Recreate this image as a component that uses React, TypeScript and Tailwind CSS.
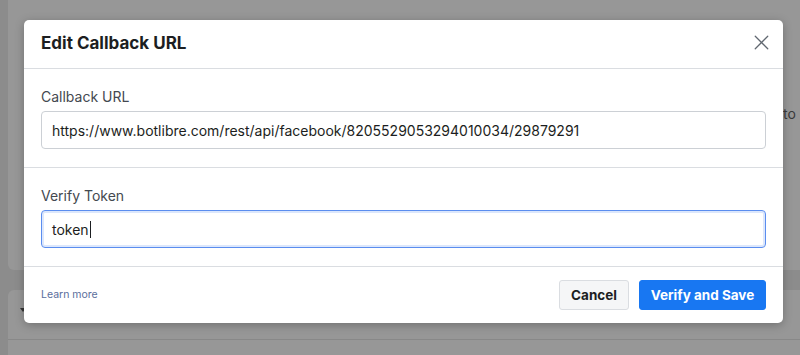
import { X } from 'lucide-react'

const font = { fontFamily: 'Inter, "Liberation Sans", Helvetica, Arial, sans-serif' }

function Field({ label, value, focused }: { label: string; value: string; focused?: boolean }) {
  return (
    <div className="px-[17px] pt-[19px] pb-[18px] border-b border-[#dadde1]">
      <div className="text-[14px] leading-[18px] text-[#444950] mb-[5px]">{label}</div>
      <div
        className={
          focused
            ? 'h-[38px] rounded-[4px] border border-[#5b8def] shadow-[inset_0_0_0_2px_#dce7fc] flex items-center px-[10px]'
            : 'h-[38px] rounded-[4px] border border-[#ccd0d5] flex items-center px-[10px]'
        }
      >
        <span className="text-[14px] text-[#1c1e21]">{value}</span>
        {focused && <span className="w-px h-[17px] bg-[#1c1e21] ml-px" />}
      </div>
    </div>
  )
}

export default function App() {
  return (
    <div className="relative w-[800px] h-[355px] overflow-hidden bg-[#8c8c8c]" style={font}>
      {/* dimmed page behind the dialog */}
      <div className="pl-[8px] flex flex-col gap-[20px]">
        <div className="h-[270px] bg-[#979797] rounded-bl-[6px] relative">
          <span className="absolute left-[775px] top-[103px] text-[14px] text-[#3a3a3a]">to</span>
        </div>
        <div className="h-[80px] bg-[#979797] rounded-tl-[6px] relative">
          <div className="h-[50px] border-b border-[#888888]" />
          <span className="absolute left-[12px] top-[18px] w-0 h-0 border-l-[3px] border-r-[3px] border-t-[4px] border-l-transparent border-r-transparent border-t-[#333]" />
        </div>
      </div>

      {/* dialog */}
      <div className="absolute left-[24px] top-[20px] w-[759px] bg-white rounded-[5px] shadow-[0_2px_10px_rgba(0,0,0,0.25)]">
        <div className="h-[49px] border-b border-[#dadde1] flex items-center justify-between pl-[17px] pr-[9px]">
          <h1 className="text-[17px] font-bold text-[#1c1e21]">Edit Callback URL</h1>
          <X size={25} strokeWidth={1.2} className="text-[#606770] -mt-[3px]" />
        </div>

        <Field label="Callback URL" value="https://www.botlibre.com/rest/api/facebook/8205529053294010034/29879291" />
        <Field label="Verify Token" value="token" focused />

        <div className="flex items-center justify-between px-[17px] py-[13px]">
          <a className="text-[10.5px] text-[#5a6e9c]">Learn more</a>
          <div className="flex gap-[10px]">
            <button className="h-[30px] w-[70px] rounded-[3px] bg-[#f5f6f7] border border-[#dadde1] text-[13.5px] font-bold text-[#1c1e21]">
              Cancel
            </button>
            <button className="h-[30px] w-[127px] rounded-[3px] bg-[#1877f2] border border-[#1877f2] text-[13.5px] font-bold text-white">
              Verify and Save
            </button>
          </div>
        </div>
      </div>
    </div>
  )
}
